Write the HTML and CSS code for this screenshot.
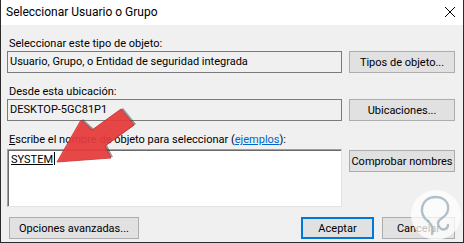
FILE: index.html
```html
<!DOCTYPE html>
<html lang="es">
<head>
  <meta charset="UTF-8">
  <title>Seleccionar Usuario o Grupo</title>
  <link rel="stylesheet" href="styles.css">
</head>
<body>
  <div class="dialog">
    <div class="titlebar">
      <span class="title">Seleccionar Usuario o Grupo</span>
      <svg class="close" width="12" height="12" viewBox="0 0 12 12">
        <path d="M1 1 L11 11 M11 1 L1 11" stroke="#000" stroke-width="1" fill="none"/>
      </svg>
    </div>

    <div class="content">
      <div class="label">Seleccionar este tipo de objeto:</div>
      <div class="row">
        <div class="field">Usuario, Grupo, o Entidad de seguridad integrada</div>
        <button class="btn">Tipos de objeto...</button>
      </div>

      <div class="label">Desde esta ubicación:</div>
      <div class="row">
        <div class="field">DESKTOP-5GC81P1</div>
        <button class="btn">Ubicaciones...</button>
      </div>

      <div class="label"><u>E</u>scribe el nombre de objeto para seleccionar (<a href="#">ejemplos</a>):</div>
      <div class="row names-row">
        <div class="names"><span class="typed">SYSTEM</span><span class="caret"></span></div>
        <button class="btn">Comprobar nombres</button>
      </div>

      <div class="footer">
        <button class="btn advanced">Opciones avanzadas...</button>
        <div class="spacer"></div>
        <button class="btn small primary">Aceptar</button>
        <button class="btn small">Cancelar</button>
      </div>
    </div>

    <!-- arrow drawn over the dialog -->
    <svg class="overlay" width="464" height="243" viewBox="0 0 464 243">
      <polygon points="57,162 81,120 92,130 121,109 134,125 105,146 111,158"
               fill="#333" opacity="0.5" transform="translate(2,-1)"/>
      <polygon points="57,162 81,120 92,130 121,109 134,125 105,146 111,158"
               fill="#f23b3b" fill-opacity="0.88" stroke="#c82828" stroke-width="0.8"/>
    </svg>

    <!-- faint watermark -->
    <svg class="watermark" width="60" height="60" viewBox="0 0 60 60">
      <circle cx="30" cy="30" r="25" fill="#ffffff" opacity="0.75"/>
      <path d="M22 36 C12 30 14 12 30 12 C44 12 46 28 36 33 C31 36 31 40 34 43 C37 46 42 44 42 40"
            fill="none" stroke="#9eb0bd" stroke-width="2.4" stroke-linecap="round" opacity="0.8"/>
      <path d="M22 36 C26 40 28 44 26 49" fill="none" stroke="#9eb0bd" stroke-width="2.4" stroke-linecap="round" opacity="0.8"/>
    </svg>
  </div>
</body>
</html>
```

FILE: styles.css
```css
* {
  box-sizing: border-box;
}

body {
  margin: 0;
  padding: 0;
  background-color: #ffffff;
  font-family: Roboto, "Liberation Sans", Arial, sans-serif;
  font-size: 11px;
  color: #000;
}

.dialog {
  position: relative;
  width: 464px;
  height: 243px;
  border: 1px solid #2b2b2b;
  border-top: none;
  background-color: #f0f0f0;
  overflow: hidden;
}

.titlebar {
  height: 25px;
  background-color: #fff;
  display: flex;
  align-items: center;
  justify-content: space-between;
  padding: 0 5px 1px 5px;
  font-size: 12px;
}

.close {
  margin-right: 2px;
}

.content {
  padding: 0 8px 0 6px;
}

.label {
  line-height: 15px;
  margin-top: 11px;
  padding-left: 2px;
}

.label a {
  color: #0066cc;
}

.row {
  display: flex;
  gap: 7px;
}

.field {
  flex: 1;
  height: 22px;
  line-height: 20px;
  border: 1px solid #7a7a7a;
  padding-left: 2px;
  background-color: #f0f0f0;
  white-space: nowrap;
  overflow: hidden;
}

.btn {
  width: 106px;
  height: 22px;
  padding: 0;
  border: 1px solid #adadad;
  background-color: #e1e1e1;
  font-family: inherit;
  font-size: 11px;
  color: #000;
}

.names-row {
  margin-top: 2px;
}

.names-row .btn {
  margin-top: 1px;
}

.names {
  flex: 1;
  height: 58px;
  background-color: #fff;
  border-top: 1px solid #a0a0a0;
  border-left: 1px solid #a0a0a0;
  border-right: 1px solid #e3e3e3;
  border-bottom: 1px solid #e3e3e3;
  box-shadow: inset 1px 1px 0 #696969;
  padding: 2px 0 0 3px;
  line-height: 14px;
}

.typed {
  text-decoration: underline;
}

.caret {
  display: inline-block;
  width: 1px;
  height: 13px;
  background-color: #000;
  vertical-align: -2px;
  margin-left: 1px;
}

.footer {
  display: flex;
  gap: 8px;
  margin-top: 10px;
  padding-left: 2px;
}

.spacer {
  flex: 1;
}

.advanced {
  width: 130px;
}

.small {
  width: 73px;
}

.primary {
  border: 2px solid #0078d7;
}

.overlay {
  position: absolute;
  left: -1px;
  top: 0;
  pointer-events: none;
}

.watermark {
  position: absolute;
  left: 405px;
  top: 185px;
  pointer-events: none;
}
```
